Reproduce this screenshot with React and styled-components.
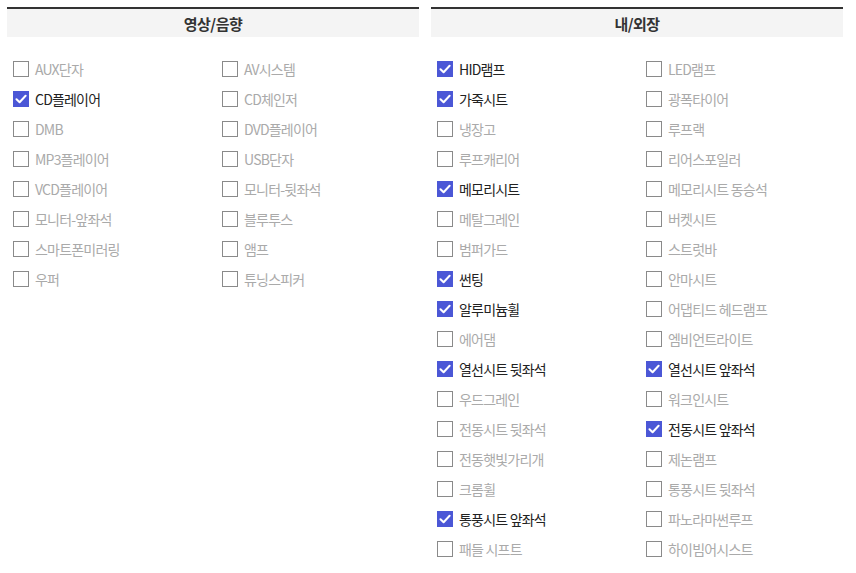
import React from "react";
import styled, { createGlobalStyle } from "styled-components";

const Global = createGlobalStyle`
  html, body { margin: 0; padding: 0; background: #fff; }
  body { font-family: "Noto Sans CJK KR", "Noto Sans", sans-serif; }
`;

const Page = styled.div`
  display: flex;
  gap: 12px;
  padding: 7px 0 0 7px;
`;

const Panel = styled.section`
  width: 412px;
`;

const Header = styled.h2`
  margin: 0;
  height: 28px;
  border-top: 2px solid #333;
  background: #f4f4f4;
  display: flex;
  align-items: center;
  justify-content: center;
  font-size: 15px;
  font-weight: 700;
  color: #333;
  letter-spacing: -0.5px;
`;

const List = styled.ul`
  list-style: none;
  margin: 0;
  padding: 17px 0 0 6px;
  display: grid;
  grid-template-columns: 209px 197px;
  grid-auto-rows: 30px;
`;

const Item = styled.li`
  display: flex;
  align-items: center;
  gap: 6px;
  font-size: 14px;
  letter-spacing: -0.8px;
  color: ${(p) => (p.$checked ? "#222" : "#aaa")};
  white-space: nowrap;
`;

const Box = styled.span`
  width: 16px;
  height: 16px;
  box-sizing: border-box;
  flex: none;
  border: ${(p) => (p.$checked ? "none" : "1px solid #8a8a8a")};
  background: ${(p) => (p.$checked ? "#4b57d6" : "#fff")};
  display: flex;
  align-items: center;
  justify-content: center;
`;

const Check = () => (
  <svg width="12" height="10" viewBox="0 0 12 10">
    <path d="M1.5 5.2 L4.6 8.2 L10.6 1.8" fill="none" stroke="#fff" strokeWidth="2" strokeLinecap="round" strokeLinejoin="round" />
  </svg>
);

const av = [
  ["AUX단자"], ["AV시스템"], ["CD플레이어", 1], ["CD체인저"], ["DMB"], ["DVD플레이어"],
  ["MP3플레이어"], ["USB단자"], ["VCD플레이어"], ["모니터-뒷좌석"], ["모니터-앞좌석"], ["블루투스"],
  ["스마트폰미러링"], ["앰프"], ["우퍼"], ["튜닝스피커"],
];

const ext = [
  ["HID램프", 1], ["LED램프"], ["가죽시트", 1], ["광폭타이어"], ["냉장고"], ["루프랙"],
  ["루프캐리어"], ["리어스포일러"], ["메모리시트", 1], ["메모리시트 동승석"], ["메탈그레인"], ["버켓시트"],
  ["범퍼가드"], ["스트럿바"], ["썬팅", 1], ["안마시트"], ["알루미늄휠", 1], ["어댑티드 헤드램프"],
  ["에어댐"], ["엠비언트라이트"], ["열선시트 뒷좌석", 1], ["열선시트 앞좌석", 1], ["우드그레인"], ["워크인시트"],
  ["전동시트 뒷좌석"], ["전동시트 앞좌석", 1], ["전동햇빛가리개"], ["제논램프"], ["크롬휠"], ["통풍시트 뒷좌석"],
  ["통풍시트 앞좌석", 1], ["파노라마썬루프"], ["패들 시프트"], ["하이빔어시스트"],
];

const Section = ({ title, items }) => (
  <Panel>
    <Header>{title}</Header>
    <List>
      {items.map(([label, c]) => (
        <Item key={label} $checked={!!c}>
          <Box $checked={!!c}>{c ? <Check /> : null}</Box>
          {label}
        </Item>
      ))}
    </List>
  </Panel>
);

export default function App() {
  return (
    <>
      <Global />
      <Page>
        <Section title="영상/음향" items={av} />
        <Section title="내/외장" items={ext} />
      </Page>
    </>
  );
}
